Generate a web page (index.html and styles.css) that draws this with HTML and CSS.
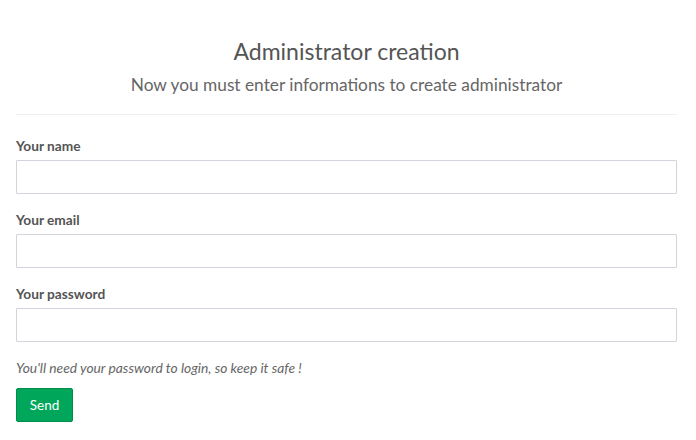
FILE: index.html
```html
<!DOCTYPE html>
<html>
<head>
<meta charset="utf-8">
<link rel="stylesheet" href="styles.css">
</head>
<body>
<div class="page">
  <header class="head">
    <h1 class="title">Administrator creation</h1>
    <p class="subtitle">Now you must enter informations to create administrator</p>
  </header>
  <form class="form">
    <div class="group">
      <label class="label">Your name</label>
      <input class="input" type="text">
    </div>
    <div class="group">
      <label class="label">Your email</label>
      <input class="input" type="text">
    </div>
    <div class="group">
      <label class="label">Your password</label>
      <input class="input" type="password">
    </div>
    <p class="help">You'll need your password to login, so keep it safe !</p>
    <button class="btn" type="button">Send</button>
  </form>
</div>
</body>
</html>
```

FILE: styles.css
```css
* { box-sizing: border-box; }
html, body { margin: 0; background: #fff; }
body {
  font-family: "Lato", "Open Sans", sans-serif;
  color: #555;
}
.page {
  width: 661px;
  margin-left: 16px;
  padding-top: 37px;
}
.head {
  text-align: center;
  border-bottom: 1px solid #eee;
  padding-bottom: 18px;
}
.title {
  margin: 0;
  font-size: 23px;
  font-weight: 400;
  color: #555;
  line-height: 28px;
}
.subtitle {
  margin: 9px 0 0;
  font-size: 17.3px;
  color: #666;
  line-height: 22px;
}
.form {
  padding-top: 22px;
}
.group {
  display: flex;
  flex-direction: column;
  margin-bottom: 17px;
}
.group:last-of-type {
  margin-bottom: 16px;
}
.label {
  font-size: 13.7px;
  font-weight: 700;
  color: #555;
  line-height: 18px;
  margin-bottom: 5px;
}
.input {
  height: 34px;
  border: 1px solid #d3d3de;
  border-radius: 1px;
  font: inherit;
  background: #fff;
}
.help {
  margin: 0 0 10px;
  font-size: 13.8px;
  font-style: italic;
  color: #666;
  line-height: 20px;
}
.btn {
  width: 57px;
  height: 34px;
  background: #00a65a;
  border: 1px solid #008d4c;
  border-radius: 2px;
  color: #fff;
  font-family: inherit;
  font-size: 13.5px;
  padding: 0;
}
```
